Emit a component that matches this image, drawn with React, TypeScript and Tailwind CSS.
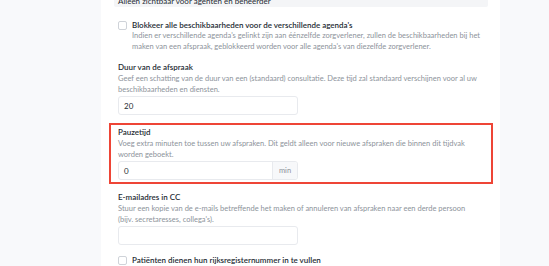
import React from 'react';

const font = { fontFamily: 'Lato, "Noto Sans", "Liberation Sans", sans-serif' };

function Field({ label, desc, children }: { label: string; desc: React.ReactNode; children: React.ReactNode }) {
  return (
    <div>
      <div className="text-[8px] leading-[11px] font-semibold text-[#262c34]">{label}</div>
      <p className="mt-[1px] text-[7.5px] leading-[10.5px] text-[#8d939b]">{desc}</p>
      <div className="mt-[1px]">{children}</div>
    </div>
  );
}

function TextInput({ value, suffix }: { value?: string; suffix?: string }) {
  return (
    <div className="flex h-[19px] w-[180px] overflow-hidden rounded-[3px] border border-[#e8eaee] bg-white">
      <div className="flex flex-1 items-center px-[5px] text-[8px] text-[#262c34]">{value}</div>
      {suffix && (
        <div className="flex w-[25px] items-center justify-center border-l border-[#e8eaee] bg-[#f7f8fa] text-[7.5px] text-[#8d939b]">
          {suffix}
        </div>
      )}
    </div>
  );
}

function Checkbox() {
  return <div className="h-[9px] w-[9px] shrink-0 rounded-[2px] border border-[#cfd3d9] bg-white" />;
}

export default function App() {
  return (
    <div className="flex h-[266px] w-[549px] overflow-hidden bg-[#f8f9fb]" style={font}>
      <div className="w-[101px] shrink-0" />
      <div className="w-[399px] shrink-0 bg-white pl-[13px] pr-[12px]">
        <div className="-mt-[5px] h-[12px] rounded-[2px] bg-[#f4f5f7] px-[4px] text-[8px] leading-[12px] text-[#262c34]">
          Alleen zichtbaar voor agenten en beheerder
        </div>

        <div className="px-[4px]">
          <div className="mt-[13px] flex gap-[5px]">
            <div className="mt-[1px]">
              <Checkbox />
            </div>
            <div className="-mr-[4px]">
              <div className="text-[8px] leading-[11px] font-semibold text-[#262c34]">
                Blokkeer alle beschikbaarheden voor de verschillende agenda's
              </div>
              <p className="text-[7.5px] leading-[10.5px] text-[#8d939b]">
                Indien er verschillende agenda's gelinkt zijn aan éénzelfde zorgverlener, zullen de beschikbaarheden bij het
                maken van een afspraak, geblokkeerd worden voor alle agenda's van diezelfde zorgverlener.
              </p>
            </div>
          </div>

          <div className="mt-[10px]">
            <Field
              label="Duur van de afspraak"
              desc="Geef een schatting van de duur van een (standaard) consultatie. Deze tijd zal standaard verschijnen voor al uw beschikbaarheden en diensten."
            >
              <TextInput value="20" />
            </Field>
          </div>

          <div className="-mx-[9px] mt-[8px] border-2 border-[#ee4536] px-[7px] pt-[2px] pb-[2px]">
            <Field
              label="Pauzetijd"
              desc="Voeg extra minuten toe tussen uw afspraken. Dit geldt alleen voor nieuwe afspraken die binnen dit tijdvak worden geboekt."
            >
              <TextInput value="0" suffix="min" />
            </Field>
          </div>

          <div className="mt-[8px]">
            <Field
              label="E-mailadres in CC"
              desc={
                <>
                  Stuur een kopie van de e-mails betreffende het maken of annuleren van afspraken naar een derde persoon
                  <br />
                  (bijv. secretaresses, collega's).
                </>
              }
            >
              <TextInput />
            </Field>
          </div>

          <div className="mt-[10px] flex items-center gap-[5px]">
            <Checkbox />
            <div className="text-[8px] leading-[11px] font-semibold text-[#262c34]">
              Patiënten dienen hun rijksregisternummer in te vullen
            </div>
          </div>
        </div>
      </div>
    </div>
  );
}
